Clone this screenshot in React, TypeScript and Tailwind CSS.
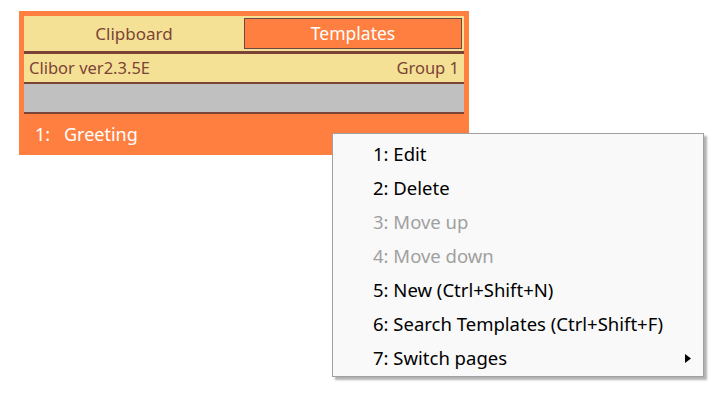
export default function App() {
  const items = [
    { label: '1: Edit', disabled: false },
    { label: '2: Delete', disabled: false },
    { label: '3: Move up', disabled: true },
    { label: '4: Move down', disabled: true },
    { label: '5: New (Ctrl+Shift+N)', disabled: false },
    { label: '6: Search Templates (Ctrl+Shift+F)', disabled: false },
    { label: '7: Switch pages', disabled: false, submenu: true },
  ];

  return (
    <div className="relative w-[727px] h-[393px] bg-white overflow-hidden" style={{ fontFamily: '"Noto Sans", sans-serif' }}>
      {/* Clibor window */}
      <div className="ml-[19px] mt-[11px] w-[450px] h-[144px] bg-[#ff7f40] pt-[5px] px-[5px] flex flex-col">
        {/* Tabs */}
        <div className="h-[35px] bg-[#f5e196] flex items-stretch py-[2px] pr-[2px]">
          <div className="w-[220px] flex items-center justify-center text-[17px] text-[#7b4434]">Clipboard</div>
          <div className="flex-1 flex items-center justify-center bg-[#ff7f40] border border-[#6e4646] text-[17.5px] text-white">
            Templates
          </div>
        </div>
        <div className="h-[3px] bg-[#7b4236]" />
        {/* Info */}
        <div className="h-[28px] bg-[#f5e196] flex items-center justify-between px-[5px] text-[16.5px] text-[#7b4434]">
          <span>Clibor ver2.3.5E</span>
          <span>Group 1</span>
        </div>
        <div className="h-[2px] bg-[#7b4236]" />
        <div className="h-[28px] bg-[#c0c0c0]" />
        <div className="h-[2px] bg-[#7b4236]" />
        <div className="flex-1 flex items-center pl-[11px] text-[18px] text-white">
          <span className="w-[29px]">1:</span>
          <span>Greeting</span>
        </div>
      </div>

      {/* Context menu */}
      <div className="absolute left-[332px] top-[133px] w-[372px] h-[244px] bg-[#f9f9f9] border border-[#a0a0a0] shadow-[3px_3px_2px_rgba(0,0,0,0.3)] pt-[3px]">
        {items.map((item) => (
          <div
            key={item.label}
            className={`relative h-[34px] flex items-center pl-[40px] text-[18.5px] ${item.disabled ? 'text-[#a0a0a0]' : 'text-black'}`}
          >
            {item.label}
            {item.submenu && (
              <svg className="absolute left-[352px] top-[13px]" width="6" height="9" viewBox="0 0 6 9">
                <path d="M0 0 L6 4.5 L0 9 Z" fill="#000" />
              </svg>
            )}
          </div>
        ))}
      </div>
    </div>
  );
}
